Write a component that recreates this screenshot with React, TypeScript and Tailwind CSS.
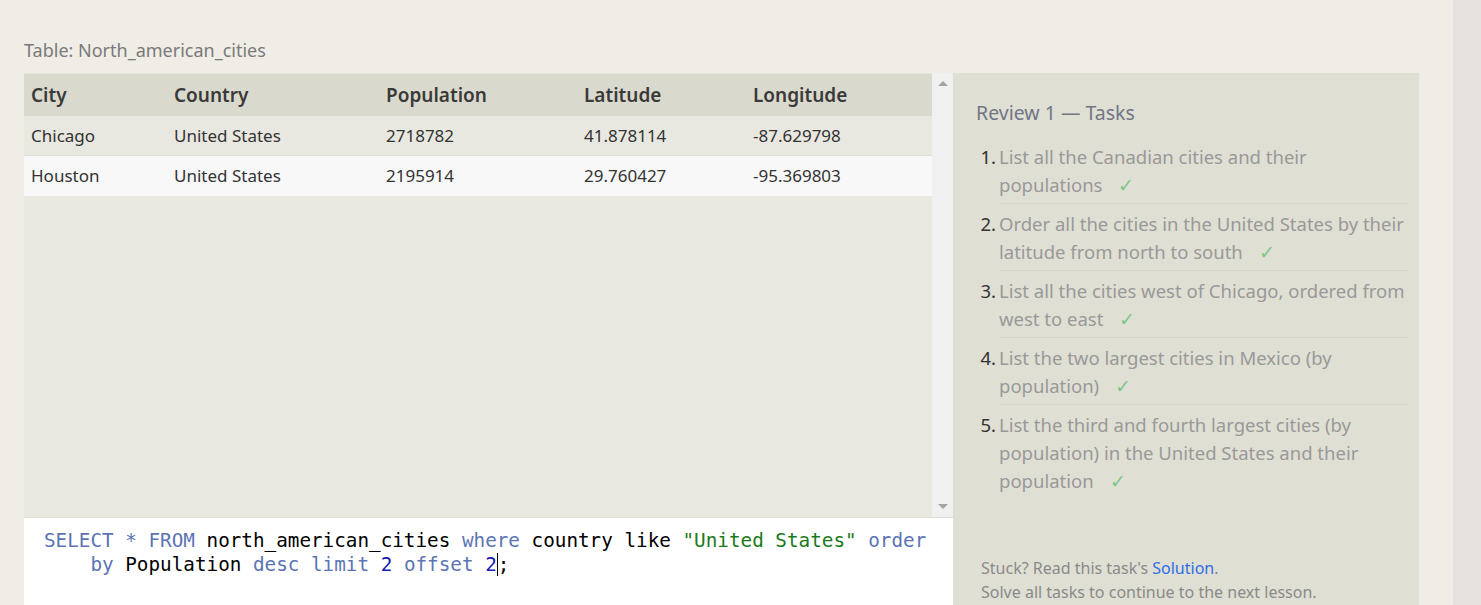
import React from "react"

const rows = [
  { city: "Chicago", country: "United States", population: "2718782", lat: "41.878114", lng: "-87.629798" },
  { city: "Houston", country: "United States", population: "2195914", lat: "29.760427", lng: "-95.369803" },
]

const tasks = [
  ["List all the Canadian cities and their", "populations"],
  ["Order all the cities in the United States by their", "latitude from north to south"],
  ["List all the cities west of Chicago, ordered from", "west to east"],
  ["List the two largest cities in Mexico (by", "population)"],
  ["List the third and fourth largest cities (by", "population) in the United States and their", "population"],
]

const cols = "grid grid-cols-[143px_212px_198px_169px_1fr] px-[7px]"

function Kw({ children }: { children: React.ReactNode }) {
  return <span className="text-[#5b74b4]">{children}</span>
}

export default function App() {
  return (
    <div className="flex h-[605px] w-full overflow-hidden font-['Noto_Sans',sans-serif]">
      <div className="w-[1453px] shrink-0 bg-[#efede6] px-[24px] pt-[37px]">
        {/* table name */}
        <div className="h-[36px] text-[18px] text-[#7a7a7a]">Table: North_american_cities</div>

        <div className="flex">
          {/* left column */}
          <div className="flex w-[929px] flex-col">
            <div className="flex h-[444px]">
              <div className="flex-1 border-t border-[#e3e2da] bg-[#e9e8e0]">
                <div className={`${cols} h-[42px] items-center bg-[#dad9cd] text-[19px] font-semibold text-[#3a3a3a]`}>
                  <div>City</div>
                  <div>Country</div>
                  <div>Population</div>
                  <div>Latitude</div>
                  <div>Longitude</div>
                </div>
                {rows.map((r, i) => (
                  <div
                    key={r.city}
                    className={`${cols} h-[40px] items-center text-[17px] text-[#333] ${
                      i === 0 ? "border-b border-[#dcdcd6] bg-[#e9e8e0]" : "bg-[#f8f8f8]"
                    }`}
                  >
                    <div>{r.city}</div>
                    <div>{r.country}</div>
                    <div>{r.population}</div>
                    <div>{r.lat}</div>
                    <div>{r.lng}</div>
                  </div>
                ))}
              </div>
              {/* scrollbar */}
              <div className="flex w-[21px] flex-col justify-between bg-[#f0f0f0] py-[8px]">
                <div className="mx-auto h-0 w-0 border-x-[5px] border-b-[5px] border-x-transparent border-b-[#a3a3a3]" />
                <div className="mx-auto h-0 w-0 border-x-[5px] border-t-[5px] border-x-transparent border-t-[#a3a3a3]" />
              </div>
            </div>

            {/* editor */}
            <div className="h-[88px] border-t border-[#dddcd5] bg-white pl-[20px] pr-[4px] pt-[11px] font-['DejaVu_Sans_Mono',monospace] text-[19.3px] leading-[24px] text-black">
              <div className="whitespace-pre">
                <Kw>SELECT</Kw> <Kw>*</Kw> <Kw>FROM</Kw> north_american_cities <Kw>where</Kw> country like{" "}
                <span className="text-[#1a7a1a]">"United States"</span> <Kw>order</Kw>
              </div>
              <div className="whitespace-pre">
                {"    "}
                <Kw>by</Kw> Population <Kw>desc</Kw> <Kw>limit</Kw> <span className="text-[#1a1ab0]">2</span>{" "}
                <Kw>offset</Kw> <span className="text-[#1a1ab0]">2</span>
                <span className="border-l border-black">;</span>
              </div>
            </div>
          </div>

          {/* tasks panel */}
          <div className="flex h-[532px] w-[466px] flex-col bg-[#e0dfd4] pl-[23px] pr-[11px] pt-[25px]">
            <div className="text-[19.5px] text-[#707684]">Review 1 — Tasks</div>
            <ol className="mt-[16px]">
              {tasks.map((t, i) => (
                <li key={i} className="flex">
                  <span className="w-[20px] shrink-0 text-right text-[18.5px] leading-[28px] text-[#333]">{i + 1}.</span>
                  <div
                    className={`ml-[3px] flex-1 whitespace-nowrap pb-[4px] text-[18.5px] leading-[28px] text-[#999] ${
                      i < tasks.length - 1 ? "mb-[6px] border-b border-[#d6d5ca]" : ""
                    }`}
                  >
                    {t.map((line, j) => (
                      <div key={j}>
                        {line}
                        {j === t.length - 1 && <span className="ml-[16px] text-[#7cc88a]">✓</span>}
                      </div>
                    ))}
                  </div>
                </li>
              ))}
            </ol>
            <div className="mt-auto pb-[1px] pl-[5px] text-[16px] leading-[24px] text-[#8a8a8a]">
              <div>
                Stuck? Read this task's <span className="text-[#2f6ee8]">Solution</span>.
              </div>
              <div>Solve all tasks to continue to the next lesson.</div>
            </div>
          </div>
        </div>
      </div>
      <div className="flex-1 bg-[#e6e2e0]" />
    </div>
  )
}
